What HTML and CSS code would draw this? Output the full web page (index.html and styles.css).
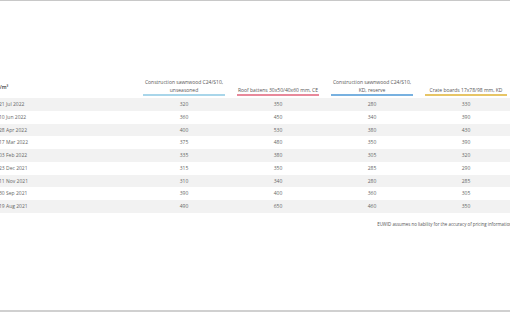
FILE: index.html
```html
<!DOCTYPE html>
<html lang="en">
<head>
    <meta charset="UTF-8">
    <meta name="viewport" content="width=device-width, initial-scale=1.0">
    <link rel="stylesheet" href="styles.css">
</head>
<body>
    <div class="frame">
        <div class="prices">
            <table class="price-table">
                <thead>
                    <tr>
                        <th class="unit">€/m³</th>
                        <th><span class="head blue-light">Construction sawnwood C24/S10,<br>unseasoned</span></th>
                        <th><span class="head red">Roof battens 30x50/40x60 mm, CE</span></th>
                        <th><span class="head blue">Construction sawnwood C24/S10,<br>KD, reserve</span></th>
                        <th><span class="head gold">Crate boards 17x78/98 mm, KD</span></th>
                    </tr>
                </thead>
                <tbody>
                    <tr><td>21 Jul 2022</td><td>320</td><td>350</td><td>280</td><td>330</td></tr>
                    <tr><td>10 Jun 2022</td><td>360</td><td>450</td><td>340</td><td>390</td></tr>
                    <tr><td>28 Apr 2022</td><td>400</td><td>530</td><td>380</td><td>430</td></tr>
                    <tr><td>17 Mar 2022</td><td>375</td><td>480</td><td>350</td><td>390</td></tr>
                    <tr><td>03 Feb 2022</td><td>335</td><td>380</td><td>305</td><td>320</td></tr>
                    <tr><td>23 Dec 2021</td><td>315</td><td>350</td><td>285</td><td>290</td></tr>
                    <tr><td>11 Nov 2021</td><td>310</td><td>340</td><td>280</td><td>285</td></tr>
                    <tr><td>30 Sep 2021</td><td>390</td><td>400</td><td>360</td><td>305</td></tr>
                    <tr><td>19 Aug 2021</td><td>490</td><td>650</td><td>460</td><td>350</td></tr>
                </tbody>
            </table>
            <p class="note">EUWID assumes no liability for the accuracy of pricing information</p>
        </div>
    </div>
</body>
</html>
```

FILE: styles.css
```css
*{
    padding: 0;
    margin: 0;
    box-sizing: border-box;
}
body{
    font-family: "Open Sans", "Liberation Sans", sans-serif;
    background: #fff;
    overflow: hidden;
}
.frame{
    height: 312px;
    width: 510px;
    border-top: 1px solid #c8c8c8;
    border-bottom: 2px solid #d0d0d0;
    overflow: hidden;
}
.prices{
    width: 516px;
    margin: 77px 0 0 -4px;
}
.price-table{
    width: 513px;
    border-collapse: collapse;
    table-layout: fixed;
}
.price-table th{
    width: 94px;
    font-size: 5px;
    font-weight: 400;
    color: #555;
    line-height: 8px;
    vertical-align: bottom;
    padding-bottom: 2px;
}
.price-table th.unit{
    width: 141px;
    text-align: left;
    vertical-align: middle;
    font-weight: 600;
    color: #333;
    padding-left: 1px;
}
.head{
    display: block;
    margin: 0 6px;
    border-bottom: 2px solid #999;
}
.blue-light{ border-color: #a9d6ea; }
.red{ border-color: #e8899b; }
.blue{ border-color: #78b1e0; }
.gold{ border-color: #e7c566; }
.price-table td{
    height: 12.75px;
    font-size: 5px;
    color: #666;
    text-align: center;
    line-height: 12.75px;
    padding: 0;
}
.price-table td:first-child{
    text-align: left;
    padding-left: 3px;
}
.price-table tbody tr:nth-child(odd){
    background: #f2f2f2;
}
.note{
    text-align: right;
    font-size: 4.4px;
    color: #555;
    margin-top: 8px;
    line-height: 6px;
}
```
